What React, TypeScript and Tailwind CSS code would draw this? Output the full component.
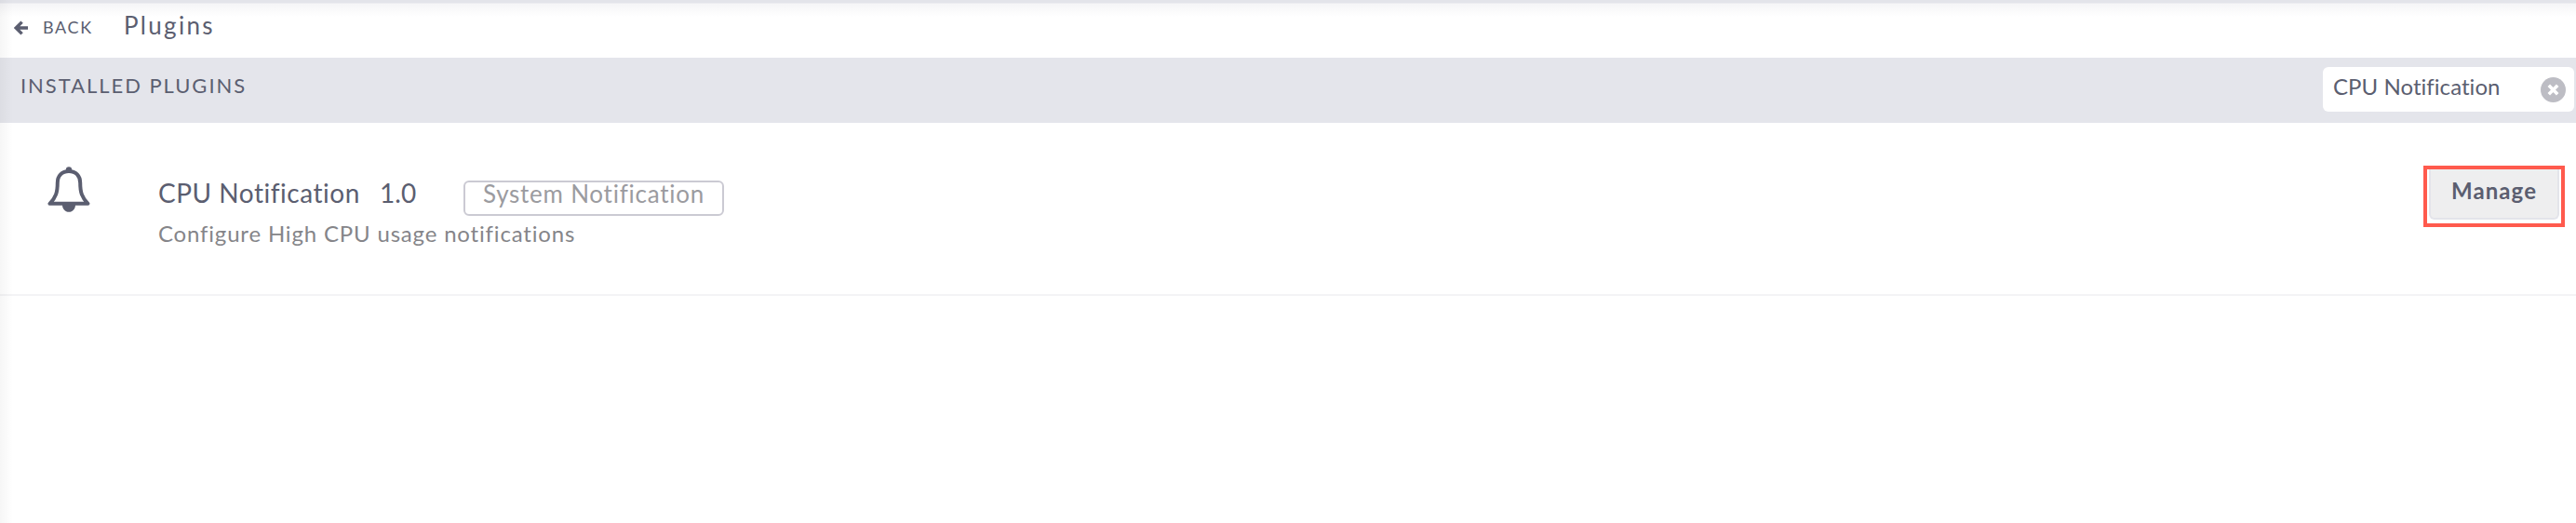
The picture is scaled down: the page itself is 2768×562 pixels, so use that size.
import React from 'react';

interface Plugin {
  name: string;
  version: string;
  type: string;
  description: string;
}

const plugins: Plugin[] = [
  {
    name: 'CPU Notification',
    version: '1.0',
    type: 'System Notification',
    description: 'Configure High CPU usage notifications',
  },
];

const BackIcon = () => (
  <svg className="mt-[22px] h-4 w-4 shrink-0" viewBox="0 0 16 16" fill="none" stroke="#5b5e70">
    <path d="M8.6 1.6 2.2 8l6.4 6.4M3 8h12" strokeWidth="3.4" />
  </svg>
);

const BellIcon = () => (
  <svg className="h-[50px] w-[46px] shrink-0" viewBox="0 0 46 50" fill="#5b5e70">
    <path
      d="M23 5C15.500 5 10.800 10 10.800 17.500c0 10-1.700 15.500-8.300 22.300h41c-6.600-6.800-8.300-12.300-8.300-22.300C35.200 10 30.500 5 23 5z"
      fill="none"
      stroke="#5b5e70"
      strokeWidth="4"
      strokeLinejoin="round"
    />
    <circle cx="23" cy="3.500" r="3.200" />
    <path d="M16 41h14c0 4.600-3 7.800-7 7.800s-7-3.200-7-7.800z" />
  </svg>
);

const ClearIcon = () => (
  <svg className="h-[27px] w-[27px] shrink-0" viewBox="0 0 27 27">
    <circle cx="13.500" cy="13.500" r="13.500" fill="#bdbdc4" />
    <path d="m8.800 8.800 9.400 9.400m0-9.400-9.400 9.400" stroke="#fff" strokeWidth="3.600" />
  </svg>
);

const PluginRow: React.FC<{ plugin: Plugin }> = ({ plugin }) => (
  <div className="flex h-[186px] items-start border-b-2 border-[#f3f3f5] pl-[51px] pr-3">
    <div className="mt-[47px]">
      <BellIcon />
    </div>
    <div className="ml-[73px] pt-12">
      <div className="flex items-start whitespace-nowrap text-[28px] leading-[54px] text-[#5b5e70]">
        <span className="w-[238px] tracking-[0.52px]">{plugin.name}</span>
        <span className="w-[90px] tracking-[0.1px]">{plugin.version}</span>
        <span className="mt-[14px] h-[38px] w-[280px] rounded-md border-2 border-[#cbcad3] pl-[19px] text-[26px] leading-[24px] tracking-[0.75px] text-[#9b9ba0]">
          {plugin.type}
        </span>
      </div>
      <p className="whitespace-nowrap text-[24px] leading-[33px] tracking-[0.82px] text-[#858589]">{plugin.description}</p>
    </div>
    <div className="ml-auto mt-[46px] h-[66px] w-[152px] border-4 border-[#ff5a4d] px-0.5">
      <button className="block h-[54px] w-[140px] rounded-b-md border-2 border-t-0 border-[#e3e4ea] bg-[#eeeeef] pb-2 text-center text-[24px] font-bold leading-[45px] tracking-[1.1px] text-[#5b5e70]">
        Manage
      </button>
    </div>
  </div>
);

export default function App() {
  return (
    <div className="relative h-[562px] w-[2768px] overflow-hidden bg-white font-[Lato,sans-serif] text-[#5b5e70]">
      <header className="flex h-[62px] items-start bg-[linear-gradient(#e3e4ea_0,#e3e4ea_3px,#f5f5f7_4px,#ffffff_18px)] pl-[15px]">
        <BackIcon />
        <span className="ml-[15px] w-[87px] text-[18px] leading-[58px] tracking-[1.6px]">BACK</span>
        <h1 className="text-[26px] leading-[54px] tracking-[2.3px]">Plugins</h1>
      </header>
      <div className="flex h-[70px] items-start justify-between bg-[#e4e5eb] pl-[22px] pr-0.5">
        <h2 className="text-[22px] leading-[59px] tracking-[1.95px]">INSTALLED PLUGINS</h2>
        <div className="mt-2.5 flex h-12 w-[270px] items-center justify-between rounded-md bg-white pl-[11px] pr-[9px]">
          <span className="mb-[7px] text-[24px] leading-[41px] tracking-[0.05px]">CPU Notification</span>
          <ClearIcon />
        </div>
      </div>
      {plugins.map((plugin) => (
        <PluginRow key={plugin.name} plugin={plugin} />
      ))}
      <div className="absolute inset-y-0 left-0 w-3.5 bg-gradient-to-r from-black/[0.035] to-transparent" />
    </div>
  );
}
